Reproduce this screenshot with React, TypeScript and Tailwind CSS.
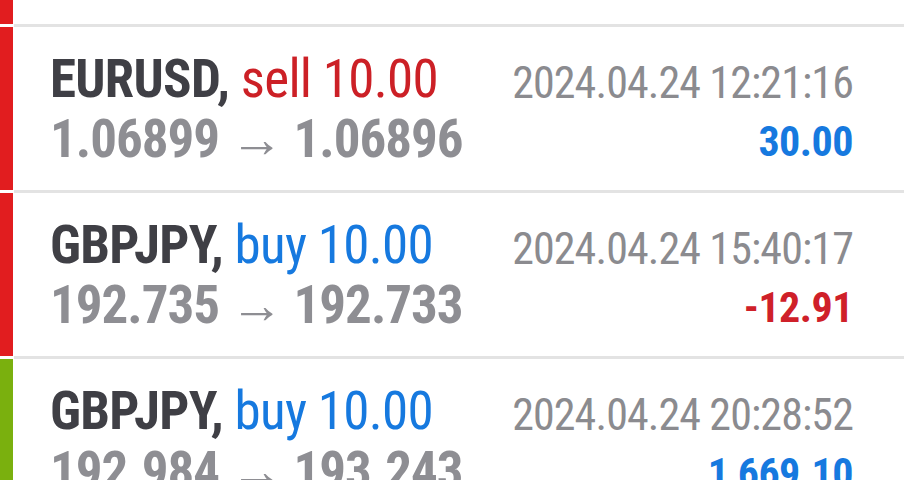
import React from "react";

type Trade = {
  symbol: string;
  side: "buy" | "sell";
  volume: string;
  open: string;
  close: string;
  time: string;
  profit: string;
  bar: string;
};

const trades: Trade[] = [
  { symbol: "EURUSD", side: "sell", volume: "10.00", open: "1.06899", close: "1.06896", time: "2024.04.24 12:21:16", profit: "30.00", bar: "bg-[#e11d1f]" },
  { symbol: "GBPJPY", side: "buy", volume: "10.00", open: "192.735", close: "192.733", time: "2024.04.24 15:40:17", profit: "-12.91", bar: "bg-[#e11d1f]" },
  { symbol: "GBPJPY", side: "buy", volume: "10.00", open: "192.984", close: "193.243", time: "2024.04.24 20:28:52", profit: "1 669.10", bar: "bg-[#7ab00e]" },
];

function TradeRow({ t }: { t: Trade }) {
  const loss = t.profit.startsWith("-");
  return (
    <div className="flex h-[166px]">
      <div className={`w-[13px] h-[163px] shrink-0 ${t.bar}`} />
      <div className="flex-1 min-w-0 ml-[1px] flex justify-between border-b-[3px] border-[#e3e3e3] pl-[36px] pr-[51px]">
        <div className="pt-[22px] text-[53px] leading-[60px] whitespace-nowrap">
          <div className="tracking-[-0.7px]">
            <span className="font-bold text-[#3f3f45]">{t.symbol},</span>{" "}
            <span className={t.side === "sell" ? "text-[#cc2026]" : "text-[#1679df]"}>
              {t.side} {t.volume}
            </span>
          </div>
          <div className="tracking-[-1px] font-bold text-[#8e8e93]">
            {t.open} → {t.close}
          </div>
        </div>
        <div className="pt-[26px] text-right whitespace-nowrap">
          <div className="text-[44px] leading-[60px] tracking-[-0.9px] text-[#8b8b8f]">{t.time}</div>
          <div className={`text-[42px] leading-[58px] tracking-[-0.5px] font-bold ${loss ? "text-[#cf2029]" : "text-[#1679df]"}`}>
            {t.profit}
          </div>
        </div>
      </div>
    </div>
  );
}

export default function App() {
  return (
    <div className="w-[904px] h-[480px] overflow-hidden bg-white font-['Roboto',sans-serif] font-stretch-[75%]">
      <div className="flex h-[27px]">
        <div className="w-[13px] h-[24px] shrink-0 bg-[#e11d1f]" />
        <div className="flex-1 ml-[1px] border-b-[3px] border-[#e3e3e3]" />
      </div>
      {trades.map((t, i) => (
        <TradeRow key={i} t={t} />
      ))}
    </div>
  );
}
